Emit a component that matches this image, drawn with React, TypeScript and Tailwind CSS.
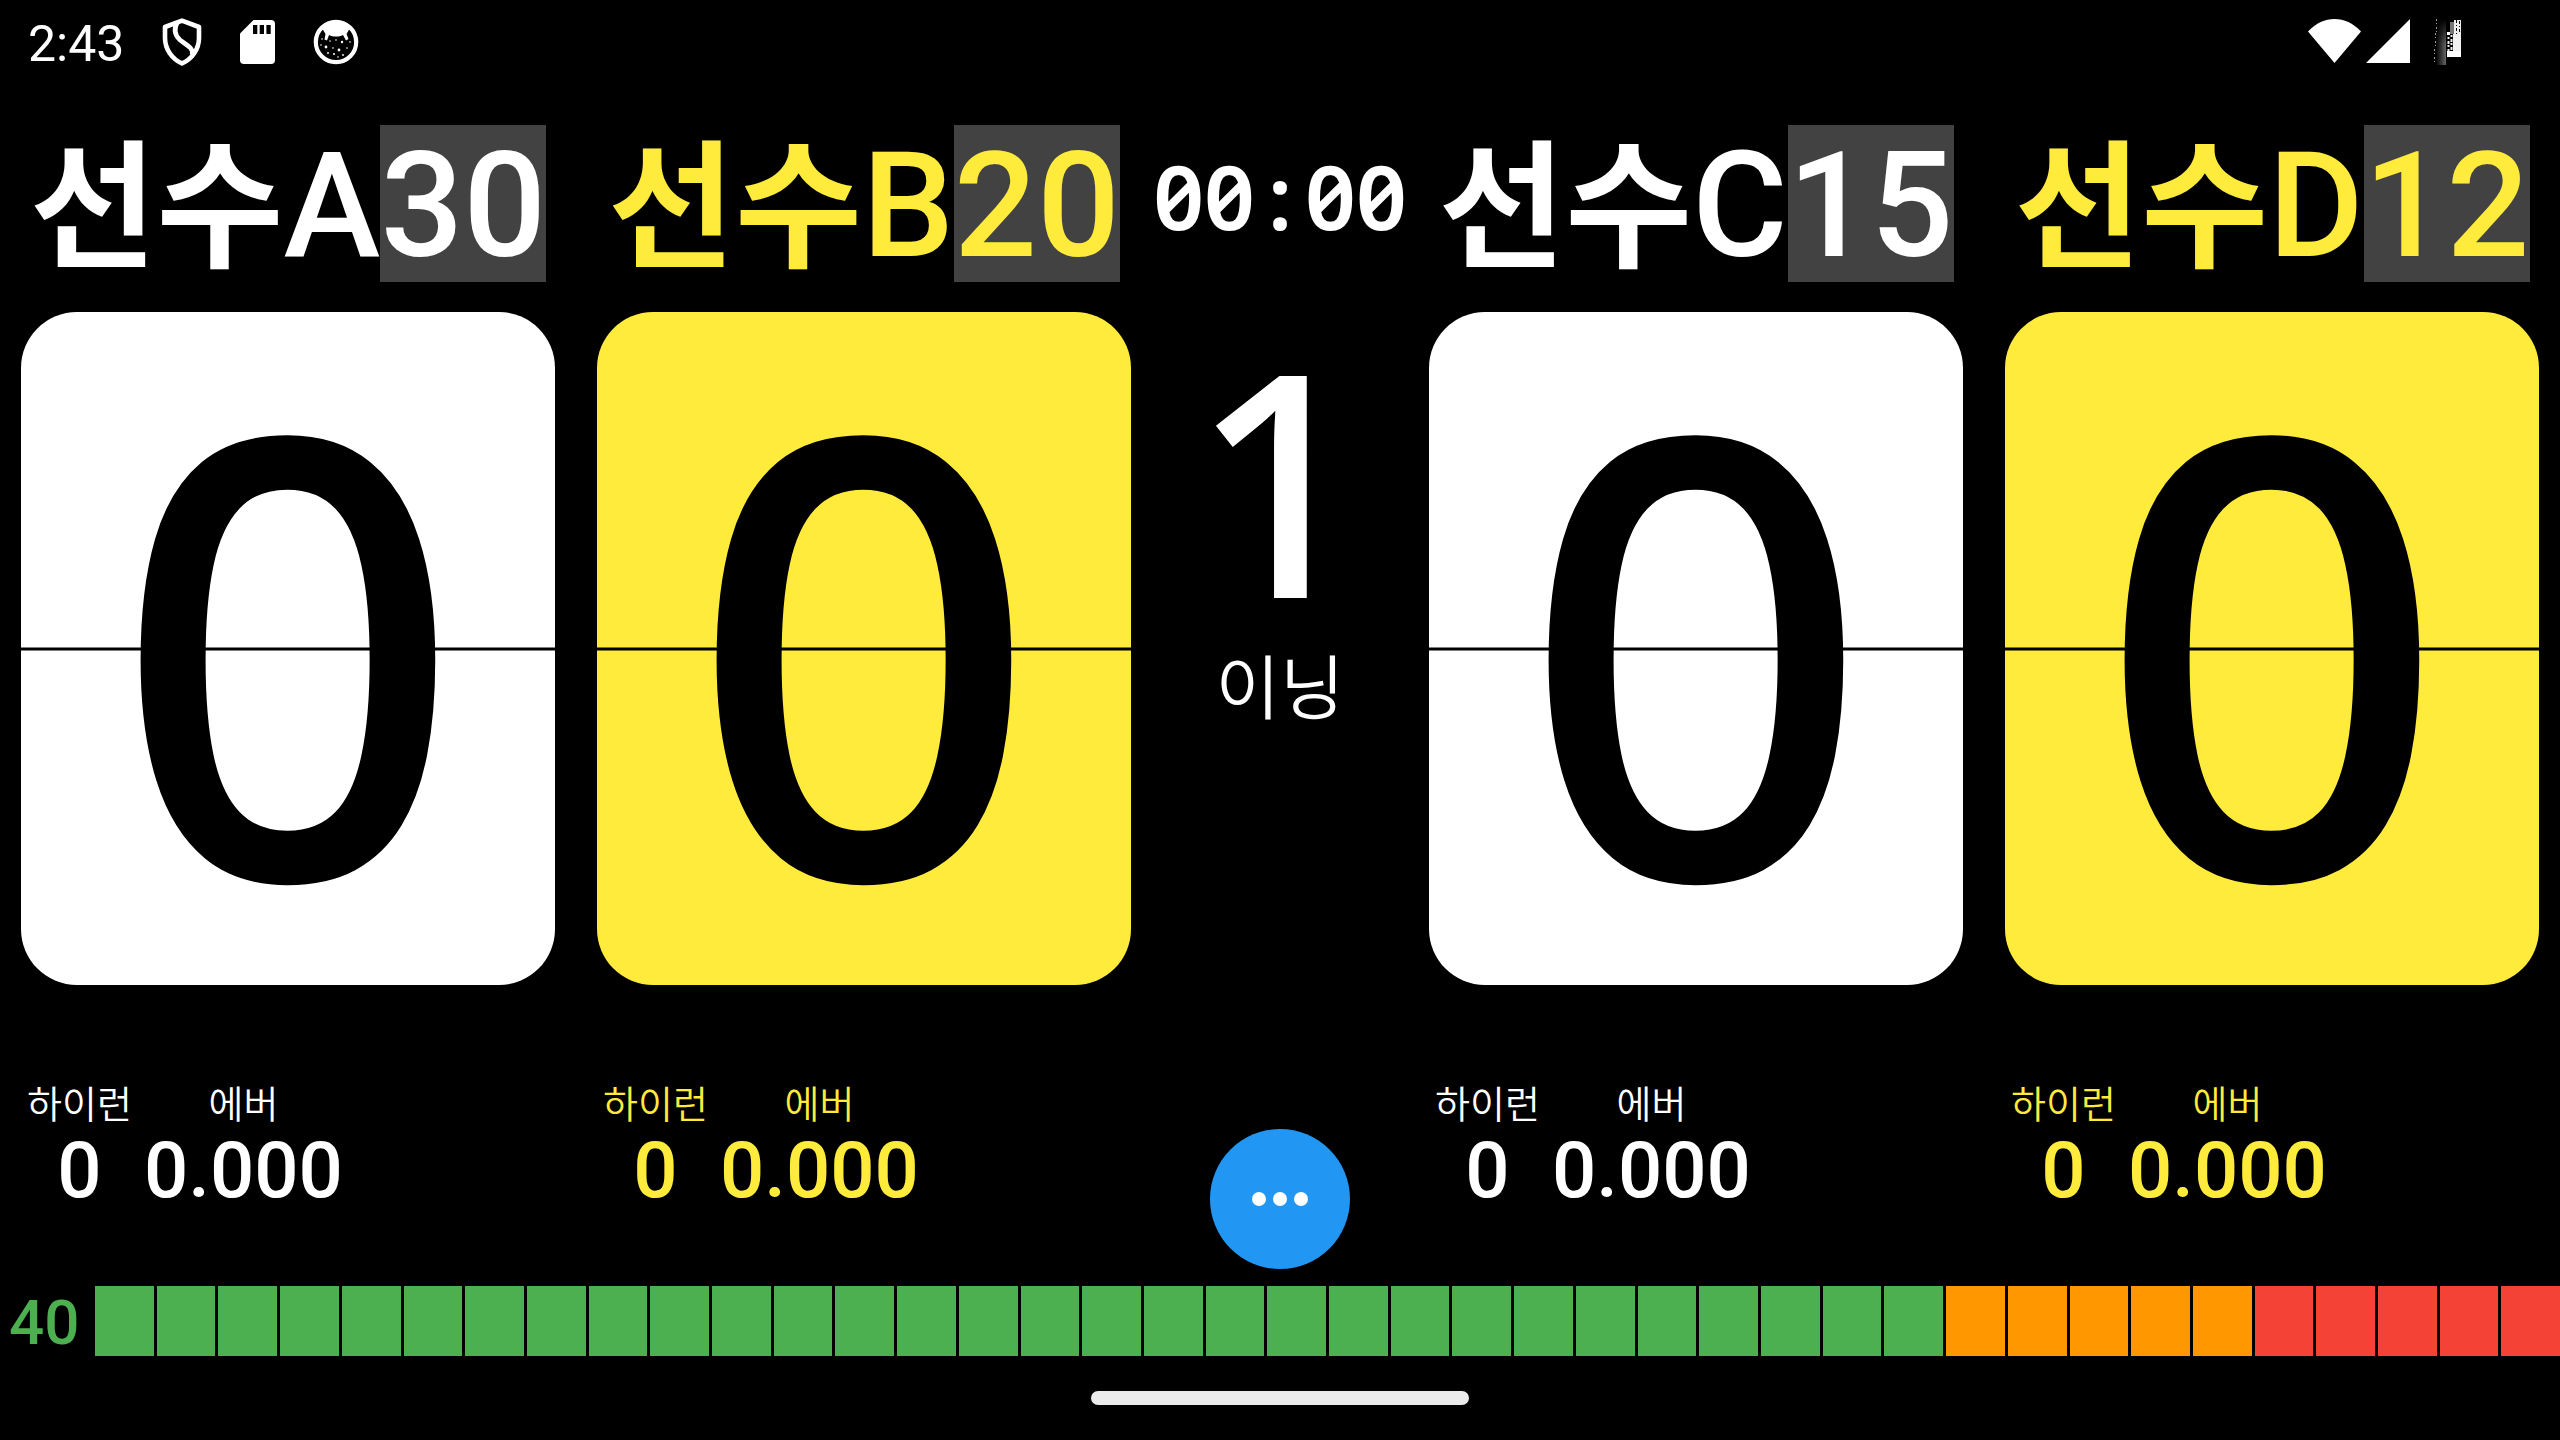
type Player = { name: string; letter: string; target: number; score: number; yellow: boolean };

const players: Player[] = [
  { name: "선수", letter: "A", target: 30, score: 0, yellow: false },
  { name: "선수", letter: "B", target: 20, score: 0, yellow: true },
  { name: "선수", letter: "C", target: 15, score: 0, yellow: false },
  { name: "선수", letter: "D", target: 12, score: 0, yellow: true },
];

const segments = Array.from({ length: 40 }, (_, i) =>
  i < 30 ? "bg-[#4caf50]" : i < 35 ? "bg-[#ff9800]" : "bg-[#f44336]",
);

function ShieldIcon() {
  return (
    <svg width="40" height="48" viewBox="0 0 40 48" fill="none" stroke="#fff" strokeWidth="4.6" strokeLinejoin="round" aria-hidden="true">
      <path d="M20 2.6 L37 9 V20 C37 31 30 41 20 45.4 C10 41 3 31 3 20 V9 Z" />
      <path d="M15.500 4 C11.500 11 12.500 17 18 22 C25 27.500 32 30 30 37" />
    </svg>
  );
}

function SdCardIcon() {
  return (
    <svg width="35" height="44" viewBox="0 0 35 44" aria-hidden="true">
      <path fill="#fff" d="M13.500 0 H31 a4 4 0 0 1 4 4 V40 a4 4 0 0 1 -4 4 H4 a4 4 0 0 1 -4 -4 V13.500 Z" />
      <path fill="#000" d="M13 5h4.300v9H13z M19.700 5h4.300v9h-4.300z M26.400 5h4.300v9h-4.300z" />
    </svg>
  );
}

function CritterIcon() {
  return (
    <svg width="46" height="46" viewBox="0 0 46 46" aria-hidden="true">
      <circle cx="23" cy="23" r="20.200" fill="none" stroke="#fff" strokeWidth="4.200" />
      <path
        fill="#fff"
        d="M9.500 10 C13 5 18 3 23 3 C28 3 33 5 36.500 10 L33.500 15 L35.500 20 L33 21.500 L30 16 C26 18 20 18 16 16 L14 21.500 L11.500 20.500 L12.500 15 Z"
      />
      <g fill="#fff">
        <circle cx="9" cy="20" r=".8" />
        <circle cx="17" cy="22" r=".8" />
        <circle cx="23" cy="21" r=".8" />
        <circle cx="29" cy="23" r="1.200" />
        <circle cx="37" cy="23" r=".8" />
        <circle cx="8" cy="26" r=".8" />
        <circle cx="13" cy="28" r="1.400" />
        <circle cx="20" cy="29" r=".8" />
        <circle cx="26" cy="31" r="1.400" />
        <circle cx="34" cy="29" r=".8" />
        <circle cx="15" cy="34" r=".9" />
        <circle cx="21" cy="35" r="1" />
        <circle cx="30" cy="36" r=".9" />
        <circle cx="25" cy="38" r=".8" />
      </g>
    </svg>
  );
}

function WifiIcon() {
  return (
    <svg width="54" height="44" viewBox="0 0 54 44" aria-hidden="true">
      <path fill="#fff" d="M0 12.500 C8 4 17 0 26.500 0 C36 0 45 4 53 12.500 L26.500 44 Z" />
    </svg>
  );
}

function SignalIcon() {
  return (
    <svg width="44" height="44" viewBox="0 0 44 44" aria-hidden="true">
      <path fill="#fff" d="M44 0 V44 H0 Z" />
    </svg>
  );
}

function BatteryIcon() {
  return (
    <svg width="28" height="46" viewBox="0 0 28 46" aria-hidden="true">
      <defs>
        <linearGradient id="battery-shade">
          <stop offset="0" stopColor="#000" />
          <stop offset="1" stopColor="#666" />
        </linearGradient>
        <linearGradient id="battery-fade" x1="0" y1="0" x2="0" y2="1">
          <stop offset="0" stopColor="#000" />
          <stop offset="1" stopColor="#000" stopOpacity="0" />
        </linearGradient>
      </defs>
      <rect x="2" width="10" height="46" fill="url(#battery-shade)" />
      <rect x="2" width="10" height="26" fill="url(#battery-fade)" />
      <path stroke="#999" strokeWidth="1" strokeDasharray="2 2 1 3" d="M2.500 0 V14 M1.500 14 V30 M.5 30 V46" />
      <rect x="16" y="3" width="4" height="12" fill="#777" />
      <rect x="20" y="1" width="7" height="14" fill="#eee" />
      <path stroke="#000" strokeWidth="1" strokeDasharray="3 2 1 2" d="M22.500 1 V15 M25.500 2 V15" />
      <rect x="13" y="13" width="3" height="3" fill="#fff" />
      <rect x="19" y="15" width="8" height="17" fill="#f2f2f2" />
      <path stroke="#eee" strokeWidth="2" strokeDasharray="2 2 3 1" d="M14.500 18 V32 M17.500 16 V32" />
      <rect x="13" y="32" width="14" height="6" fill="#fff" />
    </svg>
  );
}

function StatusBar() {
  return (
    <header className="flex h-[84px] items-center justify-between pr-[98px] pl-7">
      <div className="flex items-center">
        <time className="pt-1 text-[50px] leading-[56px]">2:43</time>
        <div className="ml-[38px] flex items-center gap-[38px]">
          <ShieldIcon />
          <SdCardIcon />
          <CritterIcon />
        </div>
      </div>
      <div className="flex items-start">
        <WifiIcon />
        <div className="ml-1"><SignalIcon /></div>
        <div className="ml-6"><BatteryIcon /></div>
      </div>
    </header>
  );
}

function Stat({ label, value }: { label: string; value: string }) {
  return (
    <div className="flex flex-col items-center gap-[11px]">
      <dt className="font-['Noto_Sans_CJK_KR',sans-serif] text-[38px] leading-none font-[350]">{label}</dt>
      <dd className="text-[78px] leading-none font-medium">{value}</dd>
    </div>
  );
}

function PlayerColumn({ player }: { player: Player }) {
  return (
    <section className={`flex min-w-0 flex-col ${player.yellow ? "text-[#ffeb3b]" : "text-white"}`}>
      <h2 className="mt-[41px] flex items-baseline justify-center text-[146px] leading-[150px] font-medium whitespace-nowrap">
        <span className="flex items-baseline">
          <span className="font-['Noto_Sans_CJK_KR',sans-serif] text-[138px] leading-none font-bold">{player.name}</span>
          <span>{player.letter}</span>
        </span>
        <span className="bg-[#424242] pt-[7px]">{player.target}</span>
      </h2>
      <button
        type="button"
        className={`relative mx-[21px] mt-[30px] flex flex-1 items-center justify-center rounded-[56px] pb-[14px] font-['Noto_Sans',sans-serif] text-[612px] leading-none font-medium text-black ${player.yellow ? "bg-[#ffeb3b]" : "bg-white"}`}
      >
        {player.score}
        <span className="absolute inset-x-0 top-1/2 h-[3px] -translate-y-1/2 bg-black" />
      </button>
      <dl className="mt-[98px] mb-[76px] flex gap-3 pl-[27px]">
        <Stat label="하이런" value="0" />
        <Stat label="에버" value="0.000" />
      </dl>
    </section>
  );
}

function CenterColumn() {
  return (
    <section className="flex min-w-0 flex-col items-center font-['Noto_Sans','Noto_Sans_CJK_KR',sans-serif]">
      <div className="mt-[62px] flex text-[89px] leading-[100px] font-semibold [font-feature-settings:'zero']">
        <span>00</span>
        <span className="w-[50px] text-center">:</span>
        <span>00</span>
      </div>
      <p className="mt-[76px] text-[311px] leading-none font-medium">1</p>
      <p className="mt-4 font-['Noto_Sans_CJK_KR',sans-serif] text-[70px] leading-none font-[350]">이닝</p>
      <button
        type="button"
        aria-label="메뉴"
        className="mt-auto mb-[17px] flex size-[140px] items-center justify-center gap-[7px] rounded-full bg-[#2196f3]"
      >
        <span className="size-[14px] rounded-full bg-white" />
        <span className="size-[14px] rounded-full bg-white" />
        <span className="size-[14px] rounded-full bg-white" />
      </button>
    </section>
  );
}

export default function App() {
  return (
    <div className="flex min-h-screen flex-col overflow-hidden bg-black font-['Roboto','Noto_Sans_CJK_KR',sans-serif] text-white">
      <StatusBar />
      <main className="grid flex-1 grid-cols-[9fr_9fr_4fr_9fr_9fr]">
        <PlayerColumn player={players[0]} />
        <PlayerColumn player={players[1]} />
        <CenterColumn />
        <PlayerColumn player={players[2]} />
        <PlayerColumn player={players[3]} />
      </main>
      <footer>
        <div className="flex h-[70px] items-center">
          <span className="w-[95px] pt-1 pl-[9px] text-[62px] leading-none font-medium text-[#4caf50]">40</span>
          <div className="flex h-full flex-1 gap-[3px]">
            {segments.map((color, i) => (
              <span key={i} className={`flex-1 ${color}`} />
            ))}
          </div>
        </div>
        <div className="mx-auto mt-[35px] mb-[35px] h-[14px] w-[378px] rounded-full bg-[#ebebeb]" />
      </footer>
    </div>
  );
}
